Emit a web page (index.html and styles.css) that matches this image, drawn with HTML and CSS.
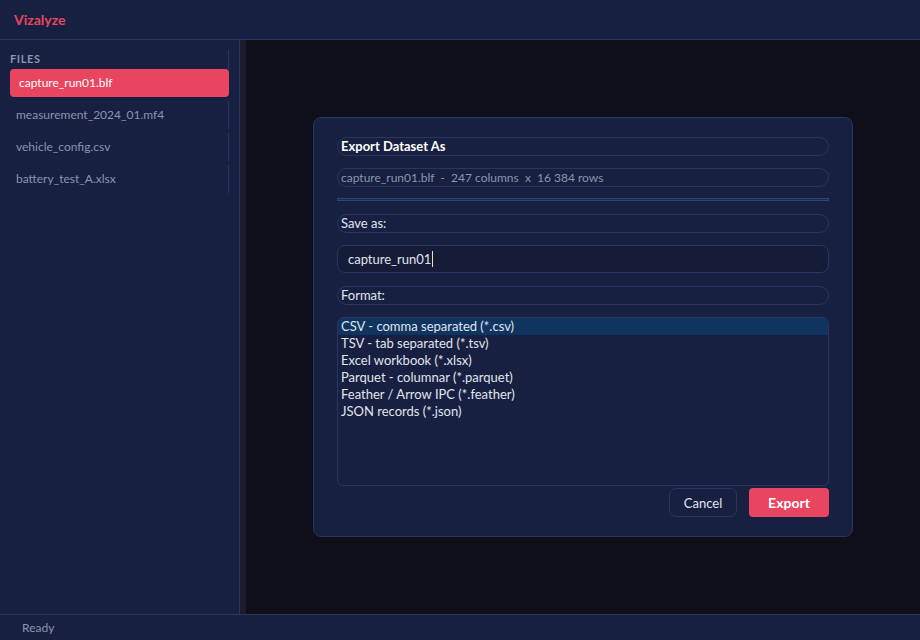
FILE: index.html
```html
<!DOCTYPE html>
<html lang="en">
<head>
    <meta charset="UTF-8">
    <title>Vizalyze</title>
    <link rel="stylesheet" href="styles.css">
</head>
<body>

<div class="app">
    <header class="topbar">
        <span class="brand">Vizalyze</span>
    </header>

    <div class="middle">
        <aside class="sidebar">
            <div class="side-title">FILES</div>
            <div class="file active">capture_run01.blf</div>
            <div class="file">measurement_2024_01.mf4</div>
            <div class="file">vehicle_config.csv</div>
            <div class="file">battery_test_A.xlsx</div>
        </aside>
        <div class="splitter"></div>
        <main class="workspace">
            <div class="dialog">
                <div class="box title">Export Dataset As</div>
                <div class="box subtitle">capture_run01.blf &nbsp;-&nbsp; 247 columns &nbsp;x&nbsp; 16 384 rows</div>
                <div class="separator"></div>
                <div class="box label">Save as:</div>
                <div class="field">capture_run01<span class="caret"></span></div>
                <div class="box label">Format:</div>
                <ul class="formats">
                    <li class="selected">CSV - comma separated (*.csv)</li>
                    <li>TSV - tab separated (*.tsv)</li>
                    <li>Excel workbook (*.xlsx)</li>
                    <li>Parquet - columnar (*.parquet)</li>
                    <li>Feather / Arrow IPC (*.feather)</li>
                    <li>JSON records (*.json)</li>
                </ul>
                <div class="buttons">
                    <button class="btn cancel">Cancel</button>
                    <button class="btn export">Export</button>
                </div>
            </div>
        </main>
    </div>

    <footer class="statusbar">Ready</footer>
</div>

</body>
</html>
```

FILE: styles.css
```css
* {
    box-sizing: border-box;
}
body {
    margin: 0;
    font-family: Lato, "Noto Sans", sans-serif;
    font-size: 13px;
    background-color: #0e0f19;
    color: #e0e4ee;
}
.app {
    display: flex;
    flex-direction: column;
    width: 920px;
    height: 640px;
}
.topbar {
    height: 40px;
    flex: none;
    background-color: #172040;
    border-bottom: 1px solid #2a3560;
    display: flex;
    align-items: center;
    padding-left: 14px;
}
.brand {
    color: #e94560;
    font-weight: bold;
    font-size: 14px;
}
.middle {
    flex: 1;
    display: flex;
    min-height: 0;
}
.sidebar {
    width: 240px;
    flex: none;
    background-color: #172040;
    border-right: 1px solid #2a3560;
    padding: 10px 10px 0 10px;
}
.side-title {
    color: #8a95b0;
    font-size: 11px;
    font-weight: bold;
    letter-spacing: 0.6px;
    height: 19px;
    line-height: 17px;
    border-right: 1px solid #2a3560;
}
.file {
    height: 28px;
    line-height: 28px;
    margin-top: 4px;
    padding-left: 6px;
    color: #8a95b0;
    font-size: 12px;
    border-right: 1px solid #2a3560;
    border-radius: 4px 0 0 4px;
}
.file.active {
    margin-top: 0;
    background-color: #e94560;
    color: #ffffff;
    padding-left: 9px;
    border-radius: 4px;
    border-right: none;
}
.splitter {
    width: 6px;
    flex: none;
    background-color: #1c1b2e;
}
.workspace {
    flex: 1;
    display: flex;
    align-items: center;
    justify-content: center;
}
.dialog {
    width: 540px;
    height: 420px;
    background-color: #172040;
    border: 1px solid #2a3560;
    border-radius: 8px;
    padding: 19px 23px 19px 23px;
    display: flex;
    flex-direction: column;
}
.box {
    border: 1px solid #2a3560;
    border-radius: 10px;
    height: 19px;
    line-height: 17px;
    padding-left: 3px;
    margin-bottom: 12px;
}
.title {
    font-weight: bold;
    color: #ffffff;
}
.subtitle {
    color: #8a95b0;
    font-size: 12px;
    margin-bottom: 11px;
}
.separator {
    height: 3px;
    border: 1px solid #34427a;
    background-color: #1d2850;
    margin-bottom: 13px;
}
.label {
    color: #e0e4ee;
}
.field {
    height: 28px;
    border: 1px solid #2a3560;
    border-radius: 8px;
    background-color: #141c38;
    padding-left: 10px;
    line-height: 26px;
    margin-bottom: 13px;
    color: #e0e4ee;
}
.caret {
    display: inline-block;
    width: 1px;
    height: 16px;
    background-color: #f0e0c0;
    vertical-align: -3px;
    margin-left: 1px;
}
.formats {
    list-style: none;
    margin: 0;
    padding: 0;
    height: 171px;
    border: 1px solid #2a3560;
    border-radius: 6px;
    overflow: hidden;
}
.formats li {
    height: 17px;
    line-height: 17px;
    padding-left: 3px;
    color: #e0e4ee;
}
.formats li.selected {
    background-color: #0f3460;
}
.buttons {
    display: flex;
    justify-content: flex-end;
    gap: 12px;
    margin-top: 2px;
}
.btn {
    font-family: inherit;
    height: 29px;
    font-size: 13px;
    cursor: pointer;
}
.cancel {
    width: 68px;
    background-color: transparent;
    border: 1px solid #2a3560;
    border-radius: 7px;
    color: #e0e4ee;
}
.export {
    width: 80px;
    background-color: #e94560;
    border: none;
    border-radius: 4px;
    color: #ffffff;
    font-weight: bold;
    font-size: 14px;
}
.statusbar {
    height: 26px;
    flex: none;
    background-color: #172040;
    border-top: 1px solid #2a3560;
    padding-left: 22px;
    line-height: 26px;
    color: #8a95b0;
    font-size: 12px;
}
```
